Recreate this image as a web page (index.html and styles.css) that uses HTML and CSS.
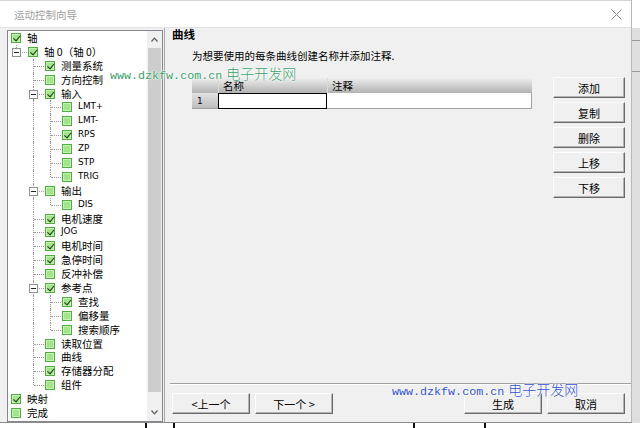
FILE: index.html
```html
<!DOCTYPE html>
<html lang="zh">
<head>
<meta charset="utf-8">
<title>运动控制向导</title>
<link rel="stylesheet" href="styles.css">
</head>
<body>
<div class="screen">
  <div class="top">
    <div class="dialog">
      <div class="titlebar">
        <span class="ttl">运动控制向导</span>
        <svg class="close" width="11" height="11" viewBox="0 0 11 11"><path d="M0.5 0.5 L10.5 10.5 M10.5 0.5 L0.5 10.5" stroke="#8a8a8a" stroke-width="1" fill="none"/></svg>
      </div>
      <div class="body">
        <div class="tree">
          <div class="list">
            <div class="row"><span class="cb on"></span><span class="tx">轴</span></div>
            <div class="row"><span class="c l"><span class="x"></span></span><span class="cb on"></span><span class="tx">轴 0（轴 0）</span></div>
            <div class="row"><span class="c"></span><span class="c t"></span><span class="cb on"></span><span class="tx">测量系统</span></div>
            <div class="row"><span class="c"></span><span class="c t"></span><span class="cb"></span><span class="tx">方向控制</span></div>
            <div class="row"><span class="c"></span><span class="c t"><span class="x"></span></span><span class="cb on"></span><span class="tx">输入</span></div>
            <div class="row"><span class="c"></span><span class="c i"></span><span class="c t"></span><span class="cb"></span><span class="tx lat">LMT+</span></div>
            <div class="row"><span class="c"></span><span class="c i"></span><span class="c t"></span><span class="cb"></span><span class="tx lat">LMT-</span></div>
            <div class="row"><span class="c"></span><span class="c i"></span><span class="c t"></span><span class="cb on"></span><span class="tx lat">RPS</span></div>
            <div class="row"><span class="c"></span><span class="c i"></span><span class="c t"></span><span class="cb"></span><span class="tx lat">ZP</span></div>
            <div class="row"><span class="c"></span><span class="c i"></span><span class="c t"></span><span class="cb"></span><span class="tx lat">STP</span></div>
            <div class="row"><span class="c"></span><span class="c i"></span><span class="c l"></span><span class="cb"></span><span class="tx lat">TRIG</span></div>
            <div class="row"><span class="c"></span><span class="c t"><span class="x"></span></span><span class="cb"></span><span class="tx">输出</span></div>
            <div class="row"><span class="c"></span><span class="c i"></span><span class="c l"></span><span class="cb"></span><span class="tx lat">DIS</span></div>
            <div class="row"><span class="c"></span><span class="c t"></span><span class="cb on"></span><span class="tx">电机速度</span></div>
            <div class="row"><span class="c"></span><span class="c t"></span><span class="cb on"></span><span class="tx lat">JOG</span></div>
            <div class="row"><span class="c"></span><span class="c t"></span><span class="cb on"></span><span class="tx">电机时间</span></div>
            <div class="row"><span class="c"></span><span class="c t"></span><span class="cb on"></span><span class="tx">急停时间</span></div>
            <div class="row"><span class="c"></span><span class="c t"></span><span class="cb"></span><span class="tx">反冲补偿</span></div>
            <div class="row"><span class="c"></span><span class="c t"><span class="x"></span></span><span class="cb on"></span><span class="tx">参考点</span></div>
            <div class="row"><span class="c"></span><span class="c i"></span><span class="c t"></span><span class="cb on"></span><span class="tx">查找</span></div>
            <div class="row"><span class="c"></span><span class="c i"></span><span class="c t"></span><span class="cb"></span><span class="tx">偏移量</span></div>
            <div class="row"><span class="c"></span><span class="c i"></span><span class="c l"></span><span class="cb"></span><span class="tx">搜索顺序</span></div>
            <div class="row"><span class="c"></span><span class="c t"></span><span class="cb"></span><span class="tx">读取位置</span></div>
            <div class="row"><span class="c"></span><span class="c t"></span><span class="cb"></span><span class="tx">曲线</span></div>
            <div class="row"><span class="c"></span><span class="c t"></span><span class="cb on"></span><span class="tx">存储器分配</span></div>
            <div class="row"><span class="c"></span><span class="c l"></span><span class="cb"></span><span class="tx">组件</span></div>
            <div class="row"><span class="cb on"></span><span class="tx">映射</span></div>
            <div class="row"><span class="cb"></span><span class="tx">完成</span></div>
          </div>
          <div class="scroll">
            <div class="sbtn"><svg width="7" height="5" viewBox="0 0 7 5"><polyline points="0.5,4.5 3.5,1.2 6.5,4.5" fill="none" stroke="#5a5a5a" stroke-width="1.2"/></svg></div>
            <div class="thumb"></div>
            <div class="track"></div>
            <div class="sbtn"><svg width="7" height="5" viewBox="0 0 7 5"><polyline points="0.5,0.5 3.5,3.8 6.5,0.5" fill="none" stroke="#5a5a5a" stroke-width="1.2"/></svg></div>
          </div>
        </div>
        <div class="main">
          <div class="h">曲线</div>
          <div class="desc">为想要使用的每条曲线创建名称并添加注释.</div>
          <div class="work">
            <div class="grid">
              <div class="ghead">
                <div class="rh"></div>
                <div class="cn hd">名称</div>
                <div class="cc hd">注释</div>
              </div>
              <div class="grow">
                <div class="rh num">1</div>
                <div class="cn edit"></div>
                <div class="cc cell"></div>
              </div>
            </div>
            <div class="btns">
              <button class="btn side">添加</button>
              <button class="btn side">复制</button>
              <button class="btn side">删除</button>
              <button class="btn side">上移</button>
              <button class="btn side">下移</button>
            </div>
          </div>
          <div class="spacer"></div>
          <div class="sep"></div>
          <div class="nav">
            <div class="grp">
              <button class="btn wide">&lt;上一个</button>
              <button class="btn wide">下一个 &gt;</button>
            </div>
            <div class="grp">
              <button class="btn wide">生成</button>
              <button class="btn wide">取消</button>
            </div>
          </div>
        </div>
      </div>
    </div>
    <div class="edge">
      <div class="edge-top"></div>
      <div class="edge-mark m1"></div>
      <div class="edge-mark m2"></div>
    </div>
  </div>
  <div class="bottom">
    <span class="tick k1"></span>
    <span class="tick k2"></span>
    <span class="tick k3"></span>
    <span class="tick k4"></span>
  </div>
  <div class="wm green"><span class="url">www.dzkfw.com.cn</span><span class="cnw">电子开发网</span></div>
  <div class="wm blue"><span class="url">www.dzkfw.com.cn</span><span class="cnw">电子开发网</span></div>
</div>
</body>
</html>
```

FILE: styles.css
```css
* { box-sizing: border-box; }
html, body { margin: 0; padding: 0; }
body {
  width: 640px;
  height: 428px;
  overflow: hidden;
  background: #fff;
  font-family: "Liberation Sans", "Noto Sans CJK SC", sans-serif;
  font-size: 10.5px;
  color: #000;
}
.screen { position: relative; display: flex; flex-direction: column; height: 428px; }
.top { display: flex; height: 423px; }
.dialog {
  width: 632px;
  display: flex;
  flex-direction: column;
  background: #f0f0f0;
  border-right: 1px solid #b8b8b8;
  border-bottom: 1px solid #8c8c8c;
}
.titlebar {
  height: 28px;
  background: #fff;
  border-top: 1px solid #d4d4d4;
  border-bottom: 1px solid #e2e2e2;
  display: flex;
  align-items: center;
  justify-content: space-between;
  padding: 0 9px 0 14px;
  color: #9e9e9e;
  font-family: "Noto Sans CJK SC", sans-serif;
  font-size: 10.5px;
}
.body { flex: 1; display: flex; min-height: 0; }

/* tree */
.tree {
  margin: 2px 0 0 7px;
  width: 156px;
  border: 1px solid #828790;
  background: #fff;
  display: flex;
  overflow: hidden;
}
.list { flex: 1; overflow: hidden; }
.row { display: flex; align-items: center; height: 13.9px; padding-left: 3px; white-space: nowrap; }
.c { position: relative; flex: none; width: 17px; height: 13.9px; }
.c.i::before, .c.t::before, .c.l::before {
  content: ""; position: absolute; left: 5px; top: 0; bottom: 0;
  border-left: 1px dotted #9a9a9a;
}
.c.l::before { bottom: 7px; }
.c.t::after, .c.l::after {
  content: ""; position: absolute; left: 6px; right: 1px; top: 7px;
  border-top: 1px dotted #9a9a9a;
}
.x {
  position: absolute; left: 1px; top: 3px; width: 9px; height: 9px;
  border: 1px solid #8f8f8f; background: #fff; z-index: 1;
}
.x::before {
  content: ""; position: absolute; left: 1px; top: 3px; width: 5px; height: 1px; background: #222;
}
.cb {
  position: relative; flex: none; width: 10px; height: 10px;
  border: 1px solid #4fae3f;
  background: #a3e38b;
  box-shadow: inset 0 0 0 1px #c6f0b4;
}
.cb.on::after {
  content: ""; position: absolute; left: 2.5px; top: 0px; width: 3px; height: 5.5px;
  border: solid #1d3b14; border-width: 0 1.7px 1.7px 0; transform: rotate(40deg);
}
.tx { margin-left: 6px; font-family: "Noto Sans CJK SC", sans-serif; font-size: 10.5px; line-height: 13.9px; }
.tx.lat { font-family: "DejaVu Sans", sans-serif; font-size: 8.8px; }

.scroll { width: 15px; flex: none; display: flex; flex-direction: column; background: #f0f0f0; }
.sbtn { height: 17px; display: flex; align-items: center; justify-content: center; }
.thumb { height: 344px; background: #cdcdcd; margin: 0 1px; }
.track { flex: 1; }

/* main */
.main {
  flex: 1;
  margin-left: 1px;
  border-left: 1px solid #a7a7a7;
  display: flex;
  flex-direction: column;
  padding: 0 6px 8px 7px;
  font-family: "Noto Sans CJK SC", sans-serif;
}
.h { font-weight: bold; font-size: 11.5px; line-height: 13px; }
.desc { margin: 8px 0 0 20px; line-height: 14px; font-size: 10.5px; }
.work { display: flex; margin-top: 14px; }
.grid { margin: 1px 0 0 20px; width: 340px; flex: none; }
.ghead { display: flex; height: 15px; background: linear-gradient(#eeeeee, #b2b2b2); }
.grow { display: flex; height: 16px; }
.rh { width: 26px; flex: none; }
.cn { width: 109px; flex: none; }
.cc { flex: 1; }
.hd { border-left: 1px solid #d9d9d9; padding-left: 4px; line-height: 15px; font-size: 10.5px; }
.num { background: linear-gradient(#e2e2e2, #bdbdbd); padding-left: 5px; line-height: 16px; font-family: "DejaVu Sans", sans-serif; font-size: 9px; border-bottom: 1px solid #a0a0a0; }
.edit { background: #fff; border: 1px solid #000; }
.cell { background: #fff; border-right: 1px solid #a0a0a0; border-bottom: 1px solid #a0a0a0; }

.btns { margin-left: 21px; display: flex; flex-direction: column; gap: 4px; }
.btn {
  margin: 0; padding: 0;
  height: 21px;
  background: #f0f0f0;
  border: 1px solid;
  border-color: #fdfdfd #6a6a6a #6a6a6a #fdfdfd;
  box-shadow: inset -1px -1px 0 #b4b4b4;
  font-family: "Noto Sans CJK SC", sans-serif;
  font-size: 11px;
  color: #000;
  display: flex; align-items: center; justify-content: center;
}
.side { width: 72px; }
.wide { width: 78px; }
.spacer { flex: 1; }
.sep { height: 2px; border-top: 1px solid #a0a0a0; border-bottom: 1px solid #fff; margin: 0 -6px 8px -2px; }
.nav { display: flex; justify-content: space-between; }
.grp { display: flex; gap: 5px; }

/* right edge & bottom strip */
.edge { flex: 1; background: #dedede; display: flex; flex-direction: column; }
.edge-top { height: 28px; background: #fff; }
.edge-mark { height: 1px; background: #9a9a9a; }
.m1 { margin-top: 12px; }
.m2 { margin-top: 30px; }
.bottom { position: relative; flex: 1; background: #fff; }
.tick { position: absolute; top: 0; bottom: 0; width: 2px; background: #111; }
.k1 { left: 145px; }
.k2 { left: 173px; }
.k3 { left: 413px; }
.k4 { left: 484px; }

/* watermarks */
.wm {
  position: absolute;
  white-space: nowrap;
  display: flex;
  align-items: baseline;
  line-height: 18px;
  text-shadow: 0 0 2px #fff, 0 0 2px #fff, 0 0 1px #fff;
}
.wm .url { font-family: "Liberation Mono", monospace; font-size: 11.7px; }
.wm .cnw { font-family: "Noto Sans CJK SC", sans-serif; font-size: 14px; margin-left: 4px; font-weight: 300; }
.green { left: 110px; top: 64px; color: #3a9f6b; }
.blue { left: 392px; top: 380px; color: #2f4fcf; }
```
